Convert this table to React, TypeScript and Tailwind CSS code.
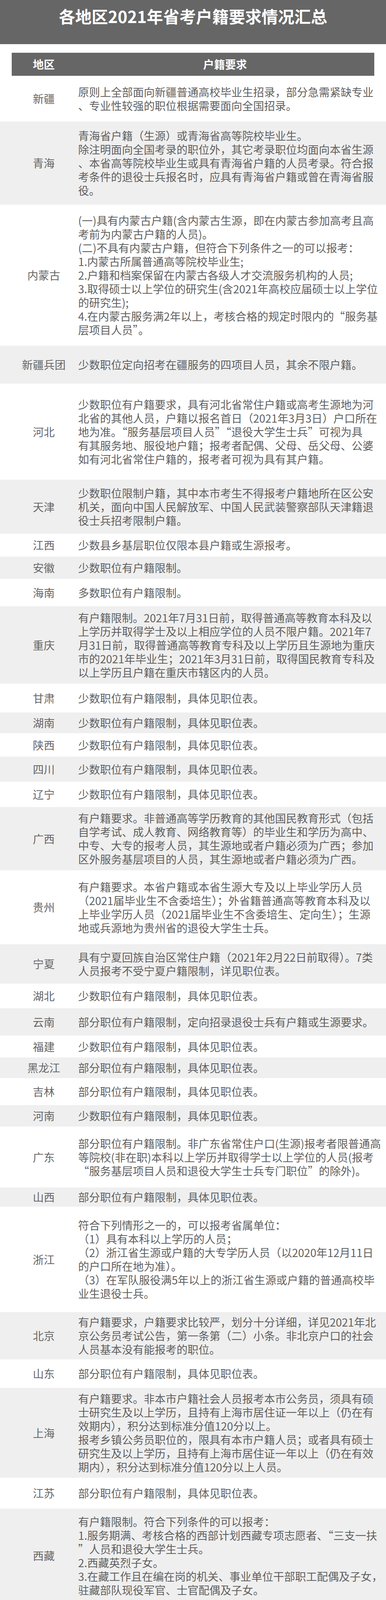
import React from 'react';

type Row = {
  region: string;
  h: string;
  lines: string[];
};

const SAME_SHAO = '少数职位有户籍限制，具体见职位表。';
const SAME_BU = '部分职位有户籍限制，具体见职位表。';

// row heights follow the source table, rows alternate white / light grey
const ROWS: Row[] = [
  {
    region: '新疆',
    h: 'h-[117px]',
    lines: ['原则上全部面向新疆普通高校毕业生招录，部分急需紧缺专业', '、专业性较强的职位根据需要面向全国招录。'],
  },
  {
    region: '青海',
    h: 'h-[213px]',
    lines: [
      '青海省户籍（生源）或青海省高等院校毕业生。',
      '除注明面向全国考录的职位外，其它考录职位均面向本省生源',
      '、本省高等院校毕业生或具有青海省户籍的人员考录。符合报',
      '考条件的退役士兵报名时，应具有青海省户籍或曾在青海省服',
      '役。',
    ],
  },
  {
    region: '内蒙古',
    h: 'h-[361px]',
    lines: [
      '(一)具有内蒙古户籍(含内蒙古生源，即在内蒙古参加高考且高',
      '考前为内蒙古户籍的人员)。',
      '(二)不具有内蒙古户籍，但符合下列条件之一的可以报考：',
      '1.内蒙古所属普通高等院校毕业生;',
      '2.户籍和档案保留在内蒙古各级人才交流服务机构的人员;',
      '3.取得硕士以上学位的研究生(含2021年高校应届硕士以上学位',
      '的研究生);',
      '4.在内蒙古服务满2年以上，考核合格的规定时限内的“服务基',
      '层项目人员”。',
    ],
  },
  { region: '新疆兵团', h: 'h-[97px]', lines: ['少数职位定向招考在疆服务的四项目人员，其余不限户籍。'] },
  {
    region: '河北',
    h: 'h-[246px]',
    lines: [
      '少数职位有户籍要求，具有河北省常住户籍或高考生源地为河',
      '北省的其他人员，户籍以报名首日（2021年3月3日）户口所在',
      '地为准。“服务基层项目人员”“退役大学生士兵”可视为具',
      '有其服务地、服役地户籍；报考者配偶、父母、岳父母、公婆',
      '如有河北省常住户籍的，报考者可视为具有其户籍。',
    ],
  },
  {
    region: '天津',
    h: 'h-[138px]',
    lines: [
      '少数职位限制户籍，其中本市考生不得报考户籍地所在区公安',
      '机关，面向中国人民解放军、中国人民武装警察部队天津籍退',
      '役士兵招考限制户籍。',
    ],
  },
  { region: '江西', h: 'h-[59px]', lines: ['少数县乡基层职位仅限本县户籍或生源报考。'] },
  { region: '安徽', h: 'h-[57px]', lines: ['少数职位有户籍限制。'] },
  { region: '海南', h: 'h-[70px]', lines: ['多数职位有户籍限制。'] },
  {
    region: '重庆',
    h: 'h-[198px]',
    lines: [
      '有户籍限制。2021年7月31日前，取得普通高等教育本科及以',
      '上学历并取得学士及以上相应学位的人员不限户籍。2021年7',
      '月31日前，取得普通高等教育专科及以上学历且生源地为重庆',
      '市的2021年毕业生；2021年3月31日前，取得国民教育专科及',
      '以上学历且户籍在重庆市辖区内的人员。',
    ],
  },
  { region: '甘肃', h: 'h-[74px]', lines: [SAME_SHAO] },
  { region: '湖南', h: 'h-[53px]', lines: [SAME_SHAO] },
  { region: '陕西', h: 'h-[60px]', lines: [SAME_SHAO] },
  { region: '四川', h: 'h-[64px]', lines: [SAME_SHAO] },
  { region: '辽宁', h: 'h-[65px]', lines: [SAME_SHAO] },
  {
    region: '广西',
    h: 'h-[162px]',
    lines: [
      '有户籍要求。非普通高等学历教育的其他国民教育形式（包括',
      '自学考试、成人教育、网络教育等）的毕业生和学历为高中、',
      '中专、大专的报考人员，其生源地或者户籍必须为广西；参加',
      '区外服务基层项目的人员，其生源地或者户籍必须为广西。',
    ],
  },
  {
    region: '贵州',
    h: 'h-[189px]',
    lines: [
      '有户籍要求。本省户籍或本省生源大专及以上毕业学历人员',
      '（2021届毕业生不含委培生）；外省籍普通高等教育本科及以',
      '上毕业学历人员（2021届毕业生不含委培生、定向生）；生源',
      '地或兵源地为贵州省的退役大学生士兵。',
    ],
  },
  {
    region: '宁夏',
    h: 'h-[101px]',
    lines: ['具有宁夏回族自治区常住户籍（2021年2月22日前取得）。7类', '人员报考不受宁夏户籍限制，详见职位表。'],
  },
  { region: '湖北', h: 'h-[63px]', lines: [SAME_SHAO] },
  { region: '云南', h: 'h-[70px]', lines: ['部分职位有户籍限制，定向招录退役士兵有户籍或生源要求。'] },
  { region: '福建', h: 'h-[56px]', lines: [SAME_SHAO] },
  { region: '黑龙江', h: 'h-[53px]', lines: [SAME_BU] },
  { region: '吉林', h: 'h-[69px]', lines: [SAME_BU] },
  { region: '河南', h: 'h-[55px]', lines: [SAME_SHAO] },
  {
    region: '广东',
    h: 'h-[156px]',
    lines: [
      '部分职位有户籍限制。非广东省常住户口(生源)报考者限普通高',
      '等院校(非在职)本科以上学历并取得学士以上学位的人员(报考',
      '“服务基层项目人员和退役大学生士兵专门职位”的除外)。',
    ],
  },
  { region: '山西', h: 'h-[49px]', lines: [SAME_BU] },
  {
    region: '浙江',
    h: 'h-[270px]',
    lines: [
      '符合下列情形之一的，可以报考省属单位：',
      '（1）具有本科以上学历的人员；',
      '（2）浙江省生源或户籍的大专学历人员（以2020年12月11日',
      '的户口所在地为准）。',
      '（3）在军队服役满5年以上的浙江省生源或户籍的普通高校毕',
      '业生退役士兵。',
    ],
  },
  {
    region: '北京',
    h: 'h-[121px]',
    lines: [
      '有户籍要求，户籍要求比较严，划分十分详细，详见2021年北',
      '京公务员考试公告，第一条第（二）小条。非北京户口的社会',
      '人员基本没有能报考的职位。',
    ],
  },
  { region: '山东', h: 'h-[73px]', lines: [SAME_BU] },
  {
    region: '上海',
    h: 'h-[230px]',
    lines: [
      '有户籍要求。非本市户籍社会人员报考本市公务员，须具有硕',
      '士研究生及以上学历，且持有上海市居住证一年以上（仍在有',
      '效期内），积分达到标准分值120分以上。',
      '报考乡镇公务员职位的，限具有本市户籍人员；或者具有硕士',
      '研究生及以上学历，且持有上海市居住证一年以上（仍在有效',
      '期内），积分达到标准分值120分以上人员。',
    ],
  },
  { region: '江苏', h: 'h-[79px]', lines: [SAME_BU] },
  {
    region: '西藏',
    h: 'h-[241px]',
    lines: [
      '有户籍限制。符合下列条件的可以报考：',
      '1.服务期满、考核合格的西部计划西藏专项志愿者、“三支一扶',
      '”人员和退役大学生士兵。',
      '2.西藏英烈子女。',
      '3.在藏工作且在编在岗的机关、事业单位干部职工配偶及子女，',
      '驻藏部队现役军官、士官配偶及子女。',
    ],
  },
];

export default function App() {
  return (
    <div
      className="w-[988px] overflow-hidden bg-white"
      style={{ fontFamily: '"Noto Sans CJK SC", sans-serif' }}
    >
      <div className="h-[113px] overflow-hidden bg-[#666666] pt-[20px] text-center">
        <h1 className="text-[42px] font-bold leading-[42px] text-white">各地区2021年省考户籍要求情况汇总</h1>
      </div>

      <div className="mx-[30px] mt-[22px] flex h-[59px] items-center bg-[#666666] text-[28px] leading-[35px] font-bold text-white">
        <div className="w-[164px] text-center">地区</div>
        <div className="flex-1 text-center">户籍要求</div>
      </div>

      {ROWS.map((row, i) => (
        <div
          key={row.region}
          className={`flex items-center overflow-hidden ${row.h} ${i % 2 === 1 ? 'bg-[#efefef]' : 'bg-white'}`}
        >
          <div className="w-[200px] shrink-0 pl-[24px] text-center text-[28px] leading-[35px] whitespace-nowrap text-[#666666]">
            {row.region}
          </div>
          <div className="min-w-0 flex-1 text-[28px] leading-[35px] text-[#5f5f5f]">
            {row.lines.map((line, j) => (
              <div key={j} className="whitespace-nowrap">
                {line}
              </div>
            ))}
          </div>
        </div>
      ))}
    </div>
  );
}
